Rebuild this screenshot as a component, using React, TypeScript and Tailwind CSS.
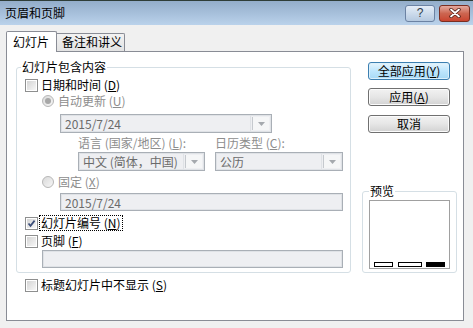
import React from 'react';

const FONT = "font-['Noto_Sans_CJK_SC','Noto_Sans',sans-serif]";

function Key({ k }: { k: string }) {
  return (
    <span>
      (<span className="underline underline-offset-1">{k}</span>)
    </span>
  );
}

function Checkbox({ checked }: { checked?: boolean }) {
  return (
    <span className="w-[13px] h-[13px] border border-[#8e8f8f] bg-white p-[1px] shrink-0">
      <span className="relative block w-full h-full bg-linear-to-br from-[#d4d4d4] to-[#f7f7f7]">
        {checked && (
          <svg viewBox="0 0 9 9" className="absolute inset-0 w-[9px] h-[9px]">
            <path d="M1.5 4.5 L3.5 6.8 L7.6 1.6" fill="none" stroke="#3b4e7a" strokeWidth="1.7" />
          </svg>
        )}
      </span>
    </span>
  );
}

function Radio({ selected }: { selected?: boolean }) {
  return (
    <span className="w-[12px] h-[12px] rounded-full border border-[#b7b7b7] bg-linear-to-br from-[#dadada] to-[#f6f6f6] flex items-center justify-center shrink-0">
      {selected && <span className="w-[6px] h-[6px] rounded-full bg-[#a7a7a7]" />}
    </span>
  );
}

function DropArrow() {
  return (
    <span className="w-[17px] h-full border-l border-[#c5c9ce] bg-[#f5f6f7] flex items-center justify-center">
      <svg width="7" height="4" viewBox="0 0 7 4">
        <path d="M0 0 H7 L3.5 4 Z" fill="#a5a9ae" />
      </svg>
    </span>
  );
}

function Field({ text, drop, className }: { text?: string; drop?: boolean; className: string }) {
  return (
    <div className={`border border-[#a9afb6] bg-[#eeeff2] flex items-stretch ${className}`}>
      <span className="flex-1 pl-[3px] text-[12px] leading-[16px] text-[#6b6b6b] border border-[#dfe2e6]">{text}</span>
      {drop && (
        <span className="border border-[#dfe2e6] border-l-0 p-[1px] flex">
          <DropArrow />
        </span>
      )}
    </div>
  );
}

function Btn({ children, primary }: { children: React.ReactNode; primary?: boolean }) {
  return (
    <div
      className={`w-[82px] h-[18px] rounded-[3px] border flex items-center justify-center text-[12px] leading-[14px] text-black ${
        primary
          ? 'border-[#3c7fb1] bg-linear-to-b from-[#e6f4fc] via-[#bee6fd] to-[#a7d9f5] shadow-[inset_0_0_0_1px_#dcf0fb]'
          : 'border-[#707070] bg-linear-to-b from-[#f2f2f2] via-[#e6e6e6] to-[#d2d2d2] shadow-[inset_0_0_0_1px_#fbfbfb]'
      }`}
    >
      {children}
    </div>
  );
}

export default function App() {
  return (
    <div className={`w-[473px] h-[328px] bg-[#f0f0f0] overflow-hidden ${FONT}`}>
      {/* title bar */}
      <div className="h-[25px] border-t border-[#2e3d38] bg-linear-to-b from-[#93adca] to-[#bad2eb] flex items-center justify-between pl-[5px] pr-[3px]">
        <span className="text-[12px] leading-[14px] text-black">页眉和页脚</span>
        <div className="flex gap-[4px]">
          <div className="w-[30px] h-[17px] rounded-[3px] border border-[#6b82a3] bg-linear-to-b from-[#e4edf7] to-[#b5c9e0] flex items-center justify-center text-[12px] leading-[12px] text-[#2f3b4b] font-['Liberation_Sans',sans-serif]">
            ?
          </div>
          <div className="w-[31px] h-[17px] rounded-[3px] border border-[#7a2e22] bg-linear-to-b from-[#e3a99f] via-[#cc6550] to-[#c9442f] flex items-center justify-center">
            <svg width="12" height="10" viewBox="0 0 12 10">
              <path d="M2 1.5 L10 8.5 M10 1.5 L2 8.5" stroke="#4a1a12" strokeWidth="3.4" strokeLinecap="round" />
              <path d="M2 1.5 L10 8.5 M10 1.5 L2 8.5" stroke="#ffffff" strokeWidth="1.8" strokeLinecap="round" />
            </svg>
          </div>
        </div>
      </div>

      <div className="pl-[6px] pt-[6px]">
        {/* tabs */}
        <div className="relative z-10 flex items-end h-[20px] text-[12px] leading-[14px]">
          <div className="h-[21px] -mb-[1px] w-[51px] border border-b-0 border-[#898c95] bg-white pl-[6px] pt-[3px] rounded-t-[2px]">
            幻灯片
          </div>
          <div className="h-[18px] w-[68px] border border-l-0 border-b-0 border-[#898c95] bg-linear-to-b from-[#f2f2f2] to-[#e3e3e3] pl-[5px] pt-[1px] rounded-tr-[2px]">
            备注和讲义
          </div>
        </div>

        {/* panel */}
        <div className="w-[458px] h-[270px] border border-[#898c95] bg-white flex text-[12px] leading-[14px] text-black">
          {/* left column */}
          <div className="ml-[9px] mt-[15px] w-[335px]">
            <div className="relative h-[206px] border border-[#d5dfe5] rounded-[3px]">
              <span className="absolute left-[4px] top-[-8px] px-[1px] bg-white leading-[14px]">幻灯片包含内容</span>

              <div className="mt-[9px] h-[16px] pl-[8px] flex items-center gap-[3px]">
                <Checkbox />
                <span>日期和时间 <Key k="D" /></span>
              </div>
              <div className="h-[16px] pl-[25px] flex items-center gap-[4px] text-[#8d8d8d]">
                <Radio selected />
                <span>自动更新 <Key k="U" /></span>
              </div>
              <Field text="2015/7/24" drop className="mt-[5px] ml-[43px] w-[212px] h-[19px]" />

              <div className="mt-[3px] ml-[61px] flex h-[14px] text-[#8d8d8d]">
                <span className="w-[137px]">语言 (国家/地区) <Key k="L" />:</span>
                <span>日历类型 <Key k="C" />:</span>
              </div>
              <div className="mt-[2px] ml-[61px] flex gap-[10px]">
                <Field text="中文 (简体，中国)" drop className="w-[127px] h-[19px]" />
                <Field text="公历" drop className="w-[128px] h-[19px]" />
              </div>

              <div className="mt-[3px] h-[16px] pl-[25px] flex items-center gap-[4px] text-[#8d8d8d]">
                <Radio />
                <span>固定 <Key k="X" /></span>
              </div>
              <Field text="2015/7/24" className="mt-[3px] ml-[43px] w-[283px] h-[18px]" />

              <div className="mt-[4px] h-[16px] pl-[8px] flex items-center gap-[1px]">
                <Checkbox checked />
                <span className="border border-dotted border-black px-[1px] leading-[14px]">
                  幻灯片编号 <Key k="N" />
                </span>
              </div>
              <div className="mt-[2px] h-[16px] pl-[8px] flex items-center gap-[3px]">
                <Checkbox />
                <span>页脚 <Key k="F" /></span>
              </div>
              <Field className="mt-[1px] ml-[25px] w-[301px] h-[18px]" />
            </div>

            <div className="mt-[4px] h-[16px] pl-[9px] flex items-center gap-[3px]">
              <Checkbox />
              <span>标题幻灯片中不显示 <Key k="S" /></span>
            </div>
          </div>

          {/* right column */}
          <div className="ml-[11px] mt-[10px] flex flex-col">
            <div className="ml-[6px] flex flex-col gap-[8px]">
              <Btn primary>全部应用 <Key k="Y" /></Btn>
              <Btn>应用 <Key k="A" /></Btn>
              <div className="mt-[1px]">
                <Btn>取消</Btn>
              </div>
            </div>

            <div className="relative mt-[58px] w-[95px] h-[82px] border border-[#d5dfe5] rounded-[3px]">
              <span className="absolute left-[6px] top-[-8px] px-[1px] bg-white leading-[14px]">预览</span>
              <div className="ml-[6px] mt-[8px] w-[81px] h-[69px] border border-[#a0a0a0] bg-white flex items-end justify-between px-[4px] pb-[1px]">
                <span className="w-[19px] h-[5px] border border-black bg-white" />
                <span className="w-[24px] h-[5px] border border-black bg-white" />
                <span className="w-[19px] h-[5px] border border-black bg-black" />
              </div>
            </div>
          </div>
        </div>
      </div>
    </div>
  );
}
